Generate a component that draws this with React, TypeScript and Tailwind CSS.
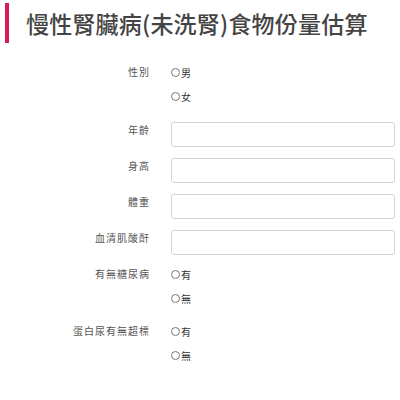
import React from "react";

const font = { fontFamily: '"Noto Sans CJK TC", "Noto Sans", sans-serif' };

function Radio({ label }: { label: string }) {
  return (
    <div className="flex items-center h-[24px] text-[10px] text-[#333]">
      <span className="inline-block w-[9px] h-[9px] rounded-full border border-[#777] mr-[1px]" />
      <span>{label}</span>
    </div>
  );
}

function RadioRow({ label, mt }: { label: string; mt: string }) {
  return (
    <div className={`flex ${mt}`}>
      <div className="w-[150px] text-right text-[10px] tracking-[1px] leading-[24px] text-[#555]">{label}</div>
      <div className="ml-[21px] flex flex-col">
        <Radio label={label === "性別" ? "男" : "有"} />
        <Radio label={label === "性別" ? "女" : "無"} />
      </div>
    </div>
  );
}

function InputRow({ label, mt }: { label: string; mt: string }) {
  return (
    <div className={`flex ${mt}`}>
      <div className="w-[150px] text-right text-[10px] tracking-[1px] leading-[16px] text-[#555]">{label}</div>
      <div className="ml-[21px] w-[224px] h-[25px] border border-[#d4d4d4] rounded-[3px] bg-white" />
    </div>
  );
}

export default function App() {
  return (
    <div className="w-[400px] h-[400px] bg-white" style={font}>
      <div className="pt-[3px] pl-[5px]">
        <div className="flex items-center h-[40px] border-l-[4px] border-[#d81b5a] pl-[17px]">
          <h1 className="text-[23px] font-medium tracking-[0.2px] text-[#444] leading-none">慢性腎臟病(未洗腎)食物份量估算</h1>
        </div>
      </div>
      <div className="mt-[17px]">
        <RadioRow label="性別" mt="mt-0" />
        <InputRow label="年齡" mt="mt-[14px]" />
        <InputRow label="身高" mt="mt-[11px]" />
        <InputRow label="體重" mt="mt-[11px]" />
        <InputRow label="血清肌酸酐" mt="mt-[11px]" />
        <RadioRow label="有無糖尿病" mt="mt-[7px]" />
        <RadioRow label="蛋白尿有無超標" mt="mt-[9px]" />
      </div>
    </div>
  );
}
